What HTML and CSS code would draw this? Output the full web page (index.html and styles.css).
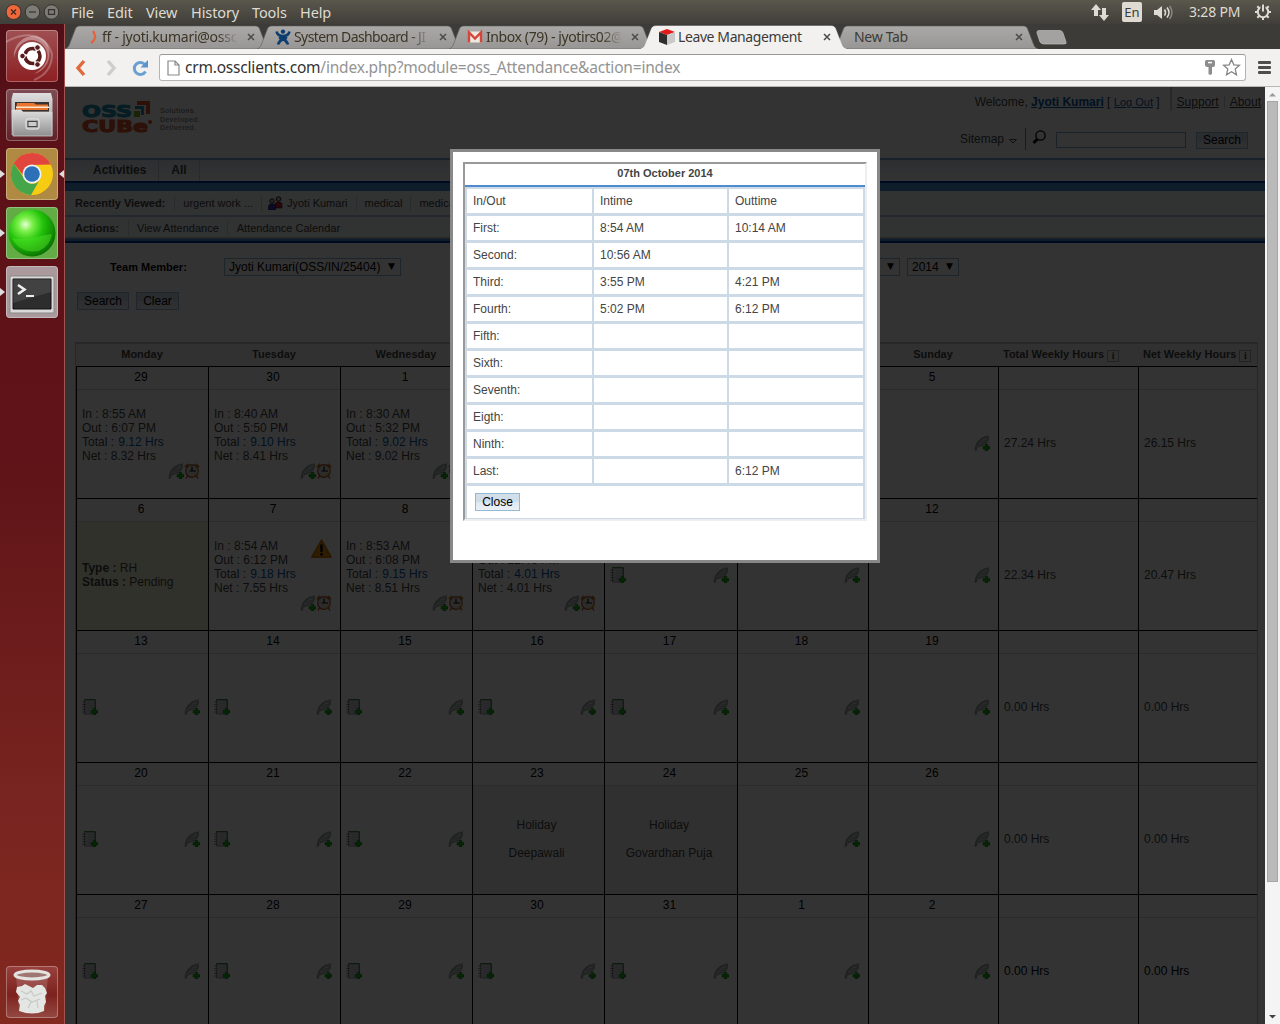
FILE: index.html
```html
<!DOCTYPE html>
<html lang="en">
<head>
<meta charset="utf-8">
<title>Leave Management</title>
<link rel="stylesheet" href="styles.css">
</head>
<body>
<svg class="defs" width="0" height="0">
  <defs>
    <linearGradient id="tabg" x1="0" y1="0" x2="0" y2="1"><stop offset="0" stop-color="#aaa9a7"/><stop offset="1" stop-color="#979694"/></linearGradient>
    <linearGradient id="metal" x1="0" y1="0" x2="0" y2="1"><stop offset="0" stop-color="#dedede"/><stop offset="1" stop-color="#8f8f8f"/></linearGradient>
    <radialGradient id="ball" cx=".36" cy=".32" r=".75"><stop offset="0" stop-color="#e6ffd8"/><stop offset=".2" stop-color="#7df04a"/><stop offset=".5" stop-color="#22c40a"/><stop offset="1" stop-color="#086a00"/></radialGradient>
    <symbol id="feather" viewBox="0 0 16 16"><path d="M1 15.500C1 9 5 2 14.500.7c.5 3-.4 6.300-3 8.300C9 10.800 5.500 11 3.300 12.500L2.200 15.500z" fill="#9aa8a0" stroke="#75827c" stroke-width=".5"/><path d="M2.500 12.500C5 8 9 4 13.500 2M5 9.500l6.500-1.200M7 7l5.500-1.200M9 4.700l4.500-.8" stroke="#dfe5e2" stroke-width=".8" fill="none"/><path d="M11.200 9.300h2.600v2.200H16V14h-2.200v2h-2.600v-2H9v-2.500h2.200z" fill="#14b414" stroke="#08700e" stroke-width=".5"/></symbol>
    <symbol id="note" viewBox="0 0 16 16"><path d="M2.500.7h10.700v14.300H2.500z" fill="#d5d8e4" stroke="#6a736a" stroke-width=".7"/><path d="M2.500.7h10.700v9" fill="none" stroke="#258025"/><path d="M.5 3h3M.5 5.500h3M.5 8h3M.5 10.500h3M.5 13h3" stroke="#777"/><path d="M5.500 4h6M5.500 6.500h6M5.500 9h6M5.500 11.500h3" stroke="#a8acb8" stroke-width=".8"/><path d="M11.200 9.300h2.600v2.200H16V14h-2.200v2h-2.600v-2H9v-2.500h2.200z" fill="#14b414" stroke="#08700e" stroke-width=".5"/></symbol>
    <symbol id="clock" viewBox="0 0 16 16"><path d="M1 4.200L4.200 1M15 4.200L11.800 1" stroke="#b8862e" stroke-width="2.200"/><path d="M3.500 13l-1.500 2.500M12.500 13l1.500 2.500" stroke="#c03a1a" stroke-width="1.300"/><circle cx="8" cy="8" r="6.300" fill="#dcdcd4" stroke="#a8502c" stroke-width="1.200"/><path d="M8 3.500V8h4M8 8H5.500" stroke="#111" stroke-width="1.200" fill="none"/><path d="M9 14.500l5.500-5.500" stroke="#d9a83a" stroke-width="1.600"/></symbol>
    <symbol id="warn" viewBox="0 0 21 19"><path d="M10.500 1.200L20 18H1z" fill="#e8930c" stroke="#d27a06" stroke-width="1.800" stroke-linejoin="round"/><path d="M10.500 6.500v5.500" stroke="#111" stroke-width="2.600" stroke-linecap="round"/><circle cx="10.500" cy="15.400" r="1.400" fill="#111"/></symbol>
    <symbol id="tabshape" viewBox="0 0 205 24"><path d="M0 24C3 23 4 21 5 18L10 5C11 2 12 1 15 1H190c3 0 4 1 5 4l5 13c1 3 2 5 5 6z"/></symbol>
    <symbol id="x" viewBox="0 0 8 8"><path d="M1 1l6 6M7 1L1 7" stroke="#4b4a48" stroke-width="1.500"/></symbol>
  </defs>
</svg>

<header class="panel">
  <div class="winbtns">
    <svg width="54" height="16" viewBox="0 0 54 16"><circle cx="8.500" cy="8" r="7.500" fill="#ee683b" stroke="#35332e"/><path d="M6 5.500l5 5M11 5.500l-5 5" stroke="#3b2a20" stroke-width="1.300"/><circle cx="27.500" cy="8" r="7.300" fill="#7c7b75" stroke="#35332e"/><path d="M24 8h7" stroke="#35332e" stroke-width="1.200"/><circle cx="46.500" cy="8" r="7.300" fill="#7c7b75" stroke="#35332e"/><path d="M43.500 5.700h6v4.600h-6z" fill="none" stroke="#35332e" stroke-width="1.200"/></svg>
  </div>
  <nav class="menus"><span class="m1">File</span><span class="m2">Edit</span><span class="m3">View</span><span class="m4">History</span><span class="m5">Tools</span><span class="m6">Help</span></nav>
  <div class="tray">
    <svg class="net" width="18" height="17" viewBox="0 0 18 17"><path d="M5 0l5 6H7v6H3V6H0zM13 17l-5-6h3V4h4v7h3z" fill="#dfdbd2"/></svg>
    <span class="lang">En</span>
    <svg class="vol" width="20" height="15" viewBox="0 0 20 15"><path d="M0 5h3l5-4v13l-5-4H0z" fill="#dfdbd2"/><path d="M10.500 4.500q2 3 0 6M13 2.500q4 5 0 10" fill="none" stroke="#dfdbd2" stroke-width="1.600"/><path d="M15.500 1q5 6.500 0 13" fill="none" stroke="#8a8780" stroke-width="1.500"/></svg>
    <span class="time">3:28 PM</span>
    <svg class="gear" width="18" height="18" viewBox="0 0 18 18"><circle cx="9" cy="9" r="5.200" fill="none" stroke="#dfdbd2" stroke-width="2"/><path d="M9 14v3M1 9h3M14 9h3M3.300 3.300l2 2M14.700 3.300l-2 2M3.300 14.700l2-2M14.700 14.700l-2-2" stroke="#dfdbd2" stroke-width="2"/><path d="M9 1v7.500" stroke="#4b4a43" stroke-width="5"/><path d="M9 1.500v7" stroke="#dfdbd2" stroke-width="2"/></svg>
  </div>
</header>

<div class="desk">
  <aside class="launcher">
    <div class="app dash"><svg viewBox="0 0 52 52"><path d="M8 28C6 10 28-2 40 12c8 12 2 28-12 32 14-8 18-20 8-30C24 4 10 14 8 28z" fill="#fff" opacity=".35"/><path d="M0 12C20 0 40 4 46 24c0 14-8 22-18 26" fill="none" stroke="#fff" opacity=".25" stroke-width="2"/><circle cx="26" cy="26" r="14" fill="#fff"/><circle cx="26.500" cy="26" r="7.500" fill="none" stroke="#591c1c" stroke-width="3.500" stroke-dasharray="13.500 2.200" stroke-dashoffset="6"/><g fill="#591c1c" stroke="#fff" stroke-width="1"><circle cx="16.500" cy="26" r="2.800"/><circle cx="31.500" cy="17.500" r="2.800"/><circle cx="31.500" cy="34.500" r="2.800"/></g></svg></div>
    <div class="app files"><svg viewBox="0 0 52 52"><path d="M7 4h38l1.500 6v36h-41V10z" fill="url(#metal)"/><path d="M9 13h34v10H9z" fill="#383330"/><path d="M11 14h17l2 1.500h12V21H10z" fill="#e9752e"/><path d="M10 17.500h33v1.500H10z" fill="#ffe9d2"/><path d="M6 21h9l2 2h29v24H7z" fill="url(#metal)" stroke="#d9d9d9" stroke-width=".7"/><rect x="20" y="30" width="13" height="10" rx="2" fill="#aaa" stroke="#eee"/><rect x="22" y="32.500" width="9" height="5" fill="#ccc" stroke="#444"/></svg></div>
    <div class="app chrome"><i class="pip"></i><i class="pip on"></i><svg viewBox="0 0 52 52"><circle cx="26" cy="26" r="21" fill="#f8cb13"/><path d="M7.800 15.500A21 21 0 0 1 44.700 16.500L26 17A9 9 0 0 0 17 27z" fill="#e2453e"/><path d="M7.800 15.500A21 21 0 0 0 25 47l8-14a9 9 0 0 1-15-3z" fill="#45a549"/><circle cx="26" cy="26" r="9.500" fill="#eef2f5"/><circle cx="26" cy="26" r="7.800" fill="#2d70b8"/></svg></div>
    <div class="app green"><i class="pip"></i><svg viewBox="0 0 52 52"><circle cx="26" cy="26" r="23.500" fill="url(#ball)"/><path d="M6 31q12 2 20 0t20-4q-2 12-13 17Q14 47 6 31z" fill="#55e52b" opacity=".45"/></svg></div>
    <div class="app term"><i class="pip"></i><svg viewBox="0 0 52 52"><path d="M4 10h44v37H4z" fill="#d9d9d9" stroke="#888"/><path d="M7 13h38v30H7z" fill="#2d2d2d" stroke="#111"/><path d="M7 13h38v13L7 37z" fill="#fff" opacity=".1"/><path d="M12 19l6.500 4.500L12 28" fill="none" stroke="#eee" stroke-width="2.600"/><path d="M20 30h8" stroke="#eee" stroke-width="2"/></svg></div>
    <div class="app trash"><svg viewBox="0 0 52 52"><path d="M10 10l3 34q12 6 26 0l3-34z" fill="#fff" opacity=".16"/><path d="M11 21l5-1 3-2 4 2 4 2 4-3 5 0 3 3 2 5-2 3 1 6-2 4 0 5q-11 5-25 0l1-6-2-4 2-4-4-5z" fill="#e4e6e3"/><path d="M15 25l6 3 4-3 3 5 8-3M15 34l5-2 6 4 8-3M22 42l3-6M32 42l-1-7" fill="none" stroke="#c6cac6" stroke-width="1.200"/><ellipse cx="26" cy="9" rx="17" ry="4" fill="#a07672" stroke="#e3e3e0" stroke-width="3"/></svg></div>
  </aside>

  <div class="browser">
    <div class="tabs">
      <div class="tab"><svg class="shape"><use href="#tabshape"/></svg><svg class="fav" viewBox="0 0 16 16"><path d="M10 2q5 7-2 12" fill="none" stroke="#e8613c" stroke-width="2.200"/></svg><span class="tt t1">ff - jyoti.kumari@ossc</span><svg class="cl"><use href="#x"/></svg></div>
      <div class="tab"><svg class="shape"><use href="#tabshape"/></svg><svg class="fav" viewBox="0 0 16 16"><g fill="none" stroke="#0d3c70" stroke-width="2.600"><path d="M1.500 2.500q1 4.500 6.500 4.500t6.500-4.500M3 15.500q1-3.500 5-5.500M13 15.500q-1-3.500-5-5.500M4 9.500l4-2 4 2"/></g><circle cx="8" cy="2.600" r="2.200" fill="#0d3c70"/></svg><span class="tt t2">System Dashboard - JI</span><svg class="cl"><use href="#x"/></svg></div>
      <div class="tab"><svg class="shape"><use href="#tabshape"/></svg><svg class="fav" viewBox="0 0 16 16"><path d="M1 2.500h14v11H1z" fill="#eee9df"/><path d="M2 13.500V3.500l6 6 6-6v10" fill="none" stroke="#d6453b" stroke-width="2.400"/></svg><span class="tt t3">Inbox (79) - jyotirs02@</span><svg class="cl"><use href="#x"/></svg></div>
      <div class="tab last"><svg class="shape"><use href="#tabshape"/></svg><span class="tt t5">New Tab</span><svg class="cl"><use href="#x"/></svg></div>
      <div class="tab active"><svg class="shape"><use href="#tabshape"/></svg><svg class="fav" viewBox="0 0 16 16"><path d="M0 3l8-3 8 3-8 3z" fill="#e21b1b"/><path d="M0 3l8 3v10l-8-3z" fill="#2e2e2e"/><path d="M16 3L8 6v10l8-3z" fill="#c9c9c9"/></svg><span class="tt t4">Leave Management</span><svg class="cl"><use href="#x"/></svg></div>
      <svg class="newtab" width="32" height="15" viewBox="0 0 32 15"><path d="M3 .5h21q2 0 3 2.500l3 9q1 2-2 2H8q-3 0-4-2L1 3Q.5.5 3 .5z" fill="#a3a2a0" stroke="#bdbcba" stroke-width=".7"/></svg>
    </div>
    <div class="toolbar">
      <svg class="tools" width="90" height="20" viewBox="0 0 90 20"><path d="M19 3l-6 7 6 7" fill="none" stroke="#e0693a" stroke-width="3.400"/><path d="M43 3l6 7-6 7" fill="none" stroke="#cfcdca" stroke-width="3.400"/><path d="M80.500 13.500a6 6 0 1 1-.3-6.500" fill="none" stroke="#6a9fd4" stroke-width="3"/><path d="M83 2v7.500h-7.500z" fill="#5b93cc"/></svg>
      <div class="omni">
        <svg width="13" height="16" viewBox="0 0 13 16"><path d="M1 1h7l4 4v10H1zM8 1v4h4" fill="#fff" stroke="#8a8a8a" stroke-width="1.200"/></svg>
        <span class="url">crm.ossclients.com<em>/index.php?module=oss_Attendance&amp;action=index</em></span>
        <svg class="key" width="10" height="15" viewBox="0 0 10 15"><path d="M0 1.500Q0 0 1.500 0h7Q10 0 10 1.500V5q0 2-3 2v7l-2 1-1.500-1V7Q0 7 0 5z" fill="#8d8d8d"/><path d="M3 1.800h4v1.500H3z" fill="#fff"/></svg>
        <svg width="19" height="19" viewBox="0 0 19 19"><path d="M9.500 1.500l2.300 5.300 5.700.5-4.300 3.800 1.300 5.700-5-3-5 3 1.300-5.700L1.500 7.300l5.700-.5z" fill="#fff" stroke="#878787" stroke-width="1.300"/></svg>
      </div>
      <div class="burger"><i></i><i></i><i></i></div>
    </div>

    <div class="view">
      <main class="page">
        <div class="head">
          <svg class="logo" width="130" height="36" viewBox="0 0 130 36"><g font-family="DejaVu Sans" font-weight="bold" font-size="15"><text x="0" y="16" textLength="50" lengthAdjust="spacingAndGlyphs" fill="#1f8fb4" stroke="#1f8fb4">OSS</text><text x="0" y="31" textLength="66" lengthAdjust="spacingAndGlyphs" fill="#e0562b" stroke="#e0562b">CUBe</text></g><circle cx="68" cy="21" r="2" fill="#e0562b"/><path d="M55 0h13v13h-4V4h-9z" fill="#e0562b"/><path d="M53 5h9v9h-3V8h-6z" fill="#1f8fb4"/><path d="M52 10h6v6h-6z" fill="#7fb02c"/><g font-family="Roboto" font-weight="500" font-size="7.600" fill="#888"><text x="78" y="12" textLength="36">Solutions.</text><text x="78" y="20.500" textLength="40">Developed.</text><text x="78" y="29" textLength="36">Delivered.</text></g></svg>
          <div class="util">
            <div class="welcome"><span>Welcome, <a class="me">Jyoti Kumari</a> [ <a class="out">Log Out</a> ]</span><i class="tall"></i><a class="sup">Support</a><i class="mini"></i><a>About</a></div>
            <div class="find"><span>Sitemap</span><svg class="caret" width="8" height="5" viewBox="0 0 8 5"><path d="M.5.500h7L4 4z" fill="none" stroke="#555"/></svg><i class="bar"></i><svg width="14" height="15" viewBox="0 0 14 15"><circle cx="8.500" cy="5.500" r="4.600" fill="none" stroke="#000" stroke-width="1.300"/><path d="M5.500 9L1.500 13" stroke="#000" stroke-width="3"/></svg><input class="q" type="text" aria-label="Search"><button class="btn">Search</button></div>
          </div>
        </div>
        <nav class="modules"><b class="act">Activities</b><b class="all">All</b></nav>
        <div class="band"></div>
        <div class="row recent"><b>Recently Viewed:</b><span>urgent work ...</span><span class="who"><svg width="15" height="14" viewBox="0 0 15 14"><circle cx="10.500" cy="3" r="2.300" fill="#cba" stroke="#000" stroke-width=".8"/><path d="M7 12V8q0-2 3.500-2T14 8v4z" fill="#d3233a" stroke="#000" stroke-width=".5"/><circle cx="4" cy="5" r="2.300" fill="#cba" stroke="#000" stroke-width=".8"/><path d="M.5 14v-4q0-2 3.500-2t3.500 2v4z" fill="#2b36c4" stroke="#000" stroke-width=".5"/></svg>Jyoti Kumari</span><span>medical</span><span>medical</span></div>
        <div class="row actions"><b>Actions:</b><span>View Attendance</span><span>Attendance Calendar</span></div>
        <form class="filter">
          <div class="fields"><b>Team Member:</b><span class="sel member">Jyoti Kumari(OSS/IN/25404)<i>▼</i></span><span class="sel month">October<i>▼</i></span><span class="sel">2014<i>▼</i></span></div>
          <div class="btns"><button type="button" class="btn">Search</button><button type="button" class="btn clear">Clear</button></div>
        </form>
        <section class="cal">
          <div class="week names"><b>Monday</b><b>Tuesday</b><b>Wednesday</b><b>Thursday</b><b>Friday</b><b>Saturday</b><b>Sunday</b><b class="hrs">Total Weekly Hours <i class="info">i</i></b><b class="hrs">Net Weekly Hours <i class="info">i</i></b></div>
          <div class="week">
            <div class="day"><h4>29</h4><div class="in">In : 8:55 AM<br>Out : 6:07 PM<br>Total : <a>9.12 Hrs</a><br>Net : 8.32 Hrs<p><svg><use href="#feather"/></svg><svg><use href="#clock"/></svg></p></div></div>
            <div class="day"><h4>30</h4><div class="in">In : 8:40 AM<br>Out : 5:50 PM<br>Total : <a>9.10 Hrs</a><br>Net : 8.41 Hrs<p><svg><use href="#feather"/></svg><svg><use href="#clock"/></svg></p></div></div>
            <div class="day"><h4>1</h4><div class="in">In : 8:30 AM<br>Out : 5:32 PM<br>Total : <a>9.02 Hrs</a><br>Net : 9.02 Hrs<p><svg><use href="#feather"/></svg><svg><use href="#clock"/></svg></p></div></div>
            <div class="day"><h4>2</h4></div><div class="day"><h4>3</h4></div><div class="day"><h4>4</h4></div>
            <div class="day"><h4>5</h4><div class="ic"><svg><use href="#feather"/></svg></div></div>
            <div class="day"><h4></h4><div class="sum">27.24 Hrs</div></div><div class="day"><h4></h4><div class="sum">26.15 Hrs</div></div>
          </div>
          <div class="week">
            <div class="day"><h4>6</h4><div class="sum leave"><span><b>Type :</b> RH<br><b>Status :</b> Pending</span></div></div>
            <div class="day"><h4>7</h4><div class="in"><svg class="warn"><use href="#warn"/></svg>In : 8:54 AM<br>Out : 6:12 PM<br>Total : <a>9.18 Hrs</a><br>Net : 7.55 Hrs<p><svg><use href="#feather"/></svg><svg><use href="#clock"/></svg></p></div></div>
            <div class="day"><h4>8</h4><div class="in">In : 8:53 AM<br>Out : 6:08 PM<br>Total : <a>9.15 Hrs</a><br>Net : 8.51 Hrs<p><svg><use href="#feather"/></svg><svg><use href="#clock"/></svg></p></div></div>
            <div class="day"><h4>9</h4><div class="in">In : 8:45 AM<br>Out : 12:46 PM<br>Total : <a>4.01 Hrs</a><br>Net : 4.01 Hrs<p><svg><use href="#feather"/></svg><svg><use href="#clock"/></svg></p></div></div>
            <div class="day"><h4>10</h4><div class="ic"><svg><use href="#note"/></svg><svg><use href="#feather"/></svg></div></div>
            <div class="day"><h4>11</h4><div class="ic"><svg><use href="#feather"/></svg></div></div>
            <div class="day"><h4>12</h4><div class="ic"><svg><use href="#feather"/></svg></div></div>
            <div class="day"><h4></h4><div class="sum">22.34 Hrs</div></div><div class="day"><h4></h4><div class="sum">20.47 Hrs</div></div>
          </div>
          <div class="week">
            <div class="day"><h4>13</h4><div class="ic"><svg><use href="#note"/></svg><svg><use href="#feather"/></svg></div></div>
            <div class="day"><h4>14</h4><div class="ic"><svg><use href="#note"/></svg><svg><use href="#feather"/></svg></div></div>
            <div class="day"><h4>15</h4><div class="ic"><svg><use href="#note"/></svg><svg><use href="#feather"/></svg></div></div>
            <div class="day"><h4>16</h4><div class="ic"><svg><use href="#note"/></svg><svg><use href="#feather"/></svg></div></div>
            <div class="day"><h4>17</h4><div class="ic"><svg><use href="#note"/></svg><svg><use href="#feather"/></svg></div></div>
            <div class="day"><h4>18</h4><div class="ic"><svg><use href="#feather"/></svg></div></div>
            <div class="day"><h4>19</h4><div class="ic"><svg><use href="#feather"/></svg></div></div>
            <div class="day"><h4></h4><div class="sum">0.00 Hrs</div></div><div class="day"><h4></h4><div class="sum">0.00 Hrs</div></div>
          </div>
          <div class="week">
            <div class="day"><h4>20</h4><div class="ic"><svg><use href="#note"/></svg><svg><use href="#feather"/></svg></div></div>
            <div class="day"><h4>21</h4><div class="ic"><svg><use href="#note"/></svg><svg><use href="#feather"/></svg></div></div>
            <div class="day"><h4>22</h4><div class="ic"><svg><use href="#note"/></svg><svg><use href="#feather"/></svg></div></div>
            <div class="day"><h4>23</h4><div class="sum hol">Holiday<br><br>Deepawali</div></div>
            <div class="day"><h4>24</h4><div class="sum hol">Holiday<br><br>Govardhan Puja</div></div>
            <div class="day"><h4>25</h4><div class="ic"><svg><use href="#feather"/></svg></div></div>
            <div class="day"><h4>26</h4><div class="ic"><svg><use href="#feather"/></svg></div></div>
            <div class="day"><h4></h4><div class="sum">0.00 Hrs</div></div><div class="day"><h4></h4><div class="sum">0.00 Hrs</div></div>
          </div>
          <div class="week">
            <div class="day"><h4>27</h4><div class="ic"><svg><use href="#note"/></svg><svg><use href="#feather"/></svg></div></div>
            <div class="day"><h4>28</h4><div class="ic"><svg><use href="#note"/></svg><svg><use href="#feather"/></svg></div></div>
            <div class="day"><h4>29</h4><div class="ic"><svg><use href="#note"/></svg><svg><use href="#feather"/></svg></div></div>
            <div class="day"><h4>30</h4><div class="ic"><svg><use href="#note"/></svg><svg><use href="#feather"/></svg></div></div>
            <div class="day"><h4>31</h4><div class="ic"><svg><use href="#note"/></svg><svg><use href="#feather"/></svg></div></div>
            <div class="day"><h4>1</h4><div class="ic"><svg><use href="#feather"/></svg></div></div>
            <div class="day"><h4>2</h4><div class="ic"><svg><use href="#feather"/></svg></div></div>
            <div class="day"><h4></h4><div class="sum dark">0.00 Hrs</div></div><div class="day"><h4></h4><div class="sum dark">0.00 Hrs</div></div>
          </div>
        </section>
      </main>
      <div class="shade"></div>
      <div class="modal">
        <div class="sheet">
          <h3>07th October 2014</h3>
          <div class="times">
            <span>In/Out</span><span>Intime</span><span>Outtime</span>
            <span>First:</span><span>8:54 AM</span><span>10:14 AM</span>
            <span>Second:</span><span>10:56 AM</span><span></span>
            <span>Third:</span><span>3:55 PM</span><span>4:21 PM</span>
            <span>Fourth:</span><span>5:02 PM</span><span>6:12 PM</span>
            <span>Fifth:</span><span></span><span></span>
            <span>Sixth:</span><span></span><span></span>
            <span>Seventh:</span><span></span><span></span>
            <span>Eigth:</span><span></span><span></span>
            <span>Ninth:</span><span></span><span></span>
            <span>Last:</span><span></span><span>6:12 PM</span>
            <div class="foot"><button class="btn close">Close</button></div>
          </div>
        </div>
      </div>
      <div class="scroll"><svg width="15" height="14" viewBox="0 0 15 14"><path d="M4 9.500h7L7.500 6z" fill="#999"/></svg><div class="thumb"></div><svg class="dn" width="15" height="14" viewBox="0 0 15 14"><path d="M4 5h7L7.500 8.500z" fill="#444"/></svg></div>
    </div>
  </div>
</div>
</body>
</html>
```
FILE: styles.css
```css
* { box-sizing: border-box; }
body { margin: 0; width: 1280px; height: 1024px; overflow: hidden; font: 12px/14px "Liberation Sans", Arial, sans-serif; color: #444; display: flex; flex-direction: column; }
svg { display: block; flex: none; }
.defs { position: absolute; }
h3, h4, p { margin: 0; font-size: inherit; }

/* desktop panel */
.panel { height: 24px; flex: none; display: flex; align-items: center; background: linear-gradient(#5a574c, #3f3e39); color: #dfdbd2; font: 14.500px/24px "Noto Sans", sans-serif; }
.winbtns { width: 71px; padding: 0 0 1px 5px; }
.menus { display: flex; flex: 1; white-space: nowrap; padding-bottom: 1px; }
.m1 { width: 36px; } .m2 { width: 39px; } .m3 { width: 45px; } .m4 { width: 61px; } .m5 { width: 48px; }
.m1, .m2, .m3, .m4, .m5, .m6 { letter-spacing: -.1px; }
.tray { width: 189px; display: flex; align-items: center; }
.lang { margin-left: 13px; width: 20px; height: 20px; border-radius: 2px; background: #dfdbd2; color: #3c3b37; font-size: 13px; line-height: 20px; text-align: center; }
.vol { margin-left: 12px; }
.time { margin-left: 15px; width: 53px; font-size: 14px; letter-spacing: -.2px; white-space: nowrap; }
.gear { margin-left: 12px; }

/* launcher */
.desk { flex: 1; display: flex; min-height: 0; }
.launcher { width: 65px; padding: 6px 0 6px 6px; display: flex; flex-direction: column; gap: 7px; background: linear-gradient(#4f0f16, #5c1118 12%, #601418 45%, #7a2520 80%, #82291f); border-right: 1px solid #a45450; }
.app { position: relative; width: 52px; height: 52px; border-radius: 4px; box-shadow: inset 0 0 0 1px rgba(255,255,255,.3); flex: none; }
.app svg { width: 52px; height: 52px; }
.dash { background: linear-gradient(#a05052, #8c1f22); }
.files { background: linear-gradient(#7f4c53, #602229); }
.chrome { background: #b08a43; }
.green { background: #62ab45; }
.term { background: #aa9a9d; }
.trash { margin-top: auto; background: linear-gradient(#98413e, #7d221e 55%, #944942); }
.pip { position: absolute; left: -6px; top: 22px; border: solid transparent; border-width: 4px 0 4px 5px; border-left-color: #ddd; }
.pip.on { left: auto; right: -6px; border-width: 4px 5px 4px 0; border-right-color: #ddd; }

/* browser chrome */
.browser { flex: 1; display: flex; flex-direction: column; min-width: 0; }
.tabs { height: 25px; padding-top: 1px; display: flex; background: #3c3b37; }
.tab { position: relative; width: 205px; height: 24px; flex: none; padding-left: 18px; display: flex; align-items: center; order: 1; }
.tab + .tab { margin-left: -13px; }
.tab.active { order: 2; z-index: 2; }
.tab.last { order: 3; padding-left: 21px; }
.newtab { order: 4; margin: 5px 0 0 -2px; }
.shape { position: absolute; left: 0; top: 0; width: 205px; height: 24px; fill: url(#tabg); stroke: #5f5e5b; stroke-width: .6px; }
.active .shape { fill: #f2f1f0; stroke: #f2f1f0; }
.fav { position: relative; width: 16px; height: 16px; margin-right: 3px; }
.tt { position: relative; width: 136px; overflow: hidden; white-space: nowrap; font: 14px/22px "Noto Sans", sans-serif; color: #3c3425; -webkit-mask-image: linear-gradient(90deg, #000 85%, transparent); mask-image: linear-gradient(90deg, #000 85%, transparent); }
.tt.t4, .tt.t5 { -webkit-mask-image: none; mask-image: none; color: #3c3b37; }
.t1 { letter-spacing: -.25px; } .t2 { letter-spacing: -.6px; } .t3 { letter-spacing: -.4px; } .t4 { letter-spacing: -.4px; } .t5 { letter-spacing: -.3px; }
.tt.t5 { width: 152px; }
.cl { position: relative; width: 8px; height: 8px; margin-left: 9px; }
.toolbar { height: 38px; flex: none; background: #f2f1f0; border-bottom: 1px solid #b8b7b5; display: flex; align-items: center; }
.omni { margin-left: 4px; width: 1087px; height: 27px; border: 1px solid #b5b4b2; border-top-color: #9a9997; border-radius: 3px; background: #fff; display: flex; align-items: center; padding: 0 4px 0 7px; }
.url { flex: 1; padding: 0 0 2px 5px; font: 15.500px/24px "Noto Sans", sans-serif; color: #333; letter-spacing: -.2px; white-space: nowrap; }
.url em { font-style: normal; color: #949494; }
.key { margin-right: 7px; }
.burger { margin-left: 12px; display: grid; gap: 2px; }
.burger i { width: 13px; height: 3px; border-radius: 1px; background: #4d4d4d; }

/* page */
.view { position: relative; flex: 1; overflow: hidden; display: flex; background: #fff; }
.page { width: 1200px; flex: none; }
.shade { position: absolute; left: 0; top: 0; width: 1200px; height: 100%; background: rgba(0,0,0,.8); }
.head { height: 71px; display: flex; justify-content: space-between; }
.logo { margin: 14px 0 0 17px; }
.util a { text-decoration: underline; }
.welcome { display: flex; height: 24px; justify-content: flex-end; align-items: center; padding: 6px 4px 0 0; white-space: nowrap; }
.me { color: #0058a8; font-weight: bold; }
.out { color: #0058a8; font-size: 11px; }
.tall { width: 2px; height: 24px; margin: -6px 5px 0 10px; background: #ccc; }
.mini { width: 1px; height: 12px; margin: 0 5px; background: #ccc; }
.find { display: flex; align-items: center; padding: 19px 17px 0 0; justify-content: flex-end; }
.find > span { margin-top: -2px; }
.caret { margin: 2px 8px 0 5px; }
.bar { width: 1px; height: 22px; background: #888; margin: -2px 6px 0 0; }
.find > svg + input { margin: 0 10px 0 10px; }
.find > svg:not(.caret) { margin-top: -6px; }
.q { width: 130px; height: 16px; border: 1px solid #7cabd8; padding: 0; background: #fff; }
.btn { font: 12px/14px "Liberation Sans", Arial, sans-serif; color: #000; width: 52px; height: 17px; padding: 0; border: 1px solid #94b9d4; background: linear-gradient(#d3dfea, #cfdde9 50%, #dfe8f0 51%, #eaf0f5); }
.modules { height: 23px; margin-top: 0; border-top: 2px solid #7ba5ce; background: linear-gradient(#dce6f0, #fff); display: flex; font-size: 12px; line-height: 20px; }
.modules b { border-right: 1px solid #c5d2de; padding: 0 12px; }
.modules .act { padding-left: 28px; }
.band { height: 10px; background: #4e8ccf; border-top: 2px solid #003a9b; }
.row { display: flex; align-items: center; height: 26px; padding-left: 10px; font-size: 11px; background: #f6f7f9; border-bottom: 2px solid #a8c4df; }
.row span { height: 16px; line-height: 16px; border-left: 1px solid #ccd6e0; padding: 0 8px; display: flex; align-items: center; white-space: nowrap; }
.row b { margin-right: 9px; }
.row .who { gap: 4px; padding-left: 6px; }
.actions { height: 26px; border-bottom: 0; background: linear-gradient(#f6f7f9 20px, #ccc 20px 21px, #4e8ccf 22px 24px, #003a9b 24px); padding-bottom: 4px; }
.actions span + span { padding-left: 9px; }
.filter { height: 99px; display: flex; flex-direction: column; padding-top: 15px; }
.fields { display: flex; height: 18px; align-items: center; padding-left: 45px; font-size: 11px; color: #000; }
.fields b { width: 114px; }
.sel { height: 18px; border: 1px solid #8db2dc; font-size: 12px; line-height: 16px; padding: 0 5px 0 4px; display: flex; justify-content: space-between; white-space: nowrap; }
.sel i { font: 9px/15px "DejaVu Sans", sans-serif; }
.member { width: 177px; } .month { width: 90px; margin-left: 409px; margin-right: 7px; }
.sel:last-child { width: 52px; }
.btns { display: flex; padding: 16px 0 0 12px; gap: 7px; }
.btns .btn { height: 18px; }
.clear { width: 43px; }

/* calendar */
.cal { margin-left: 10px; width: 1183px; border: 1px solid #bcc3cc; border-top: 2px solid #bcc3cc; height: 800px; }
.week { display: grid; grid-template-columns: 132px 132px 132px 132px 133px 131px 130px 140px 119px; height: 132px; }
.names { height: 22px; font-size: 11px; line-height: 20px; text-align: center; background: #f6f6f6; white-space: nowrap; }
.hrs { text-align: left; padding-left: 5px; }
.info { display: inline-block; width: 12px; height: 12px; border: 1px solid #aaa; font: bold 10px/10px "Liberation Serif", serif; text-align: center; vertical-align: -1px; }
.day { border-left: 1px solid #000; border-top: 1px solid #000; display: flex; flex-direction: column; }
.day h4 { height: 23px; line-height: 21px; font-weight: normal; color: #000; text-align: center; border-bottom: 1px solid #d0d5da; padding-right: 3px; }
.day a { color: #0058a8; margin-left: 1px; }
.in { position: relative; padding: 17px 8px 0 5px; }
.in p { display: flex; justify-content: flex-end; }
.in p svg, .ic svg { width: 16px; height: 16px; }
.in .warn { position: absolute; right: 8px; top: 17px; width: 21px; height: 19px; }
.ic { padding: 45px 8px 0 5px; display: flex; justify-content: space-between; }
.ic svg:only-child { margin-left: auto; }
.sum { flex: 1; padding: 0 0 2px 5px; display: flex; align-items: center; }
.leave { background: #f5f3d6; }
.hol { display: block; text-align: center; padding: 32px 4px 0 0; background: #efefef; }
.dark { color: #000; }

/* punch details */
.modal { position: absolute; left: 385px; top: 62px; width: 430px; height: 414px; border: 3px solid #888; background: #fff; padding: 10px; }
.sheet { width: 404px; border: 2px solid; border-color: #999 #eee #eee #999; }
.sheet h3 { height: 23px; line-height: 19px; font-size: 11px; text-align: center; border-bottom: 2px solid #4e8ccf; }
.times { display: grid; grid-template-columns: 125px 133px 134px; grid-template-rows: repeat(11, 24px) 32px; gap: 3px 2px; background: #ccdae8; padding: 2px 2px 1px; }
.times span { background: #fff; padding-left: 6px; line-height: 24px; }
.foot { grid-column: 1 / 4; background: #fff; padding: 7px 8px; }
.close { display: block; width: 45px; height: 18px; }

.scroll { width: 15px; background: #f4f4f4; display: flex; flex-direction: column; }
.thumb { width: 11px; height: 781px; margin-left: 2px; background: #bababa; border: 1px solid #a6a6a6; }
.dn { margin-top: auto; }
```
